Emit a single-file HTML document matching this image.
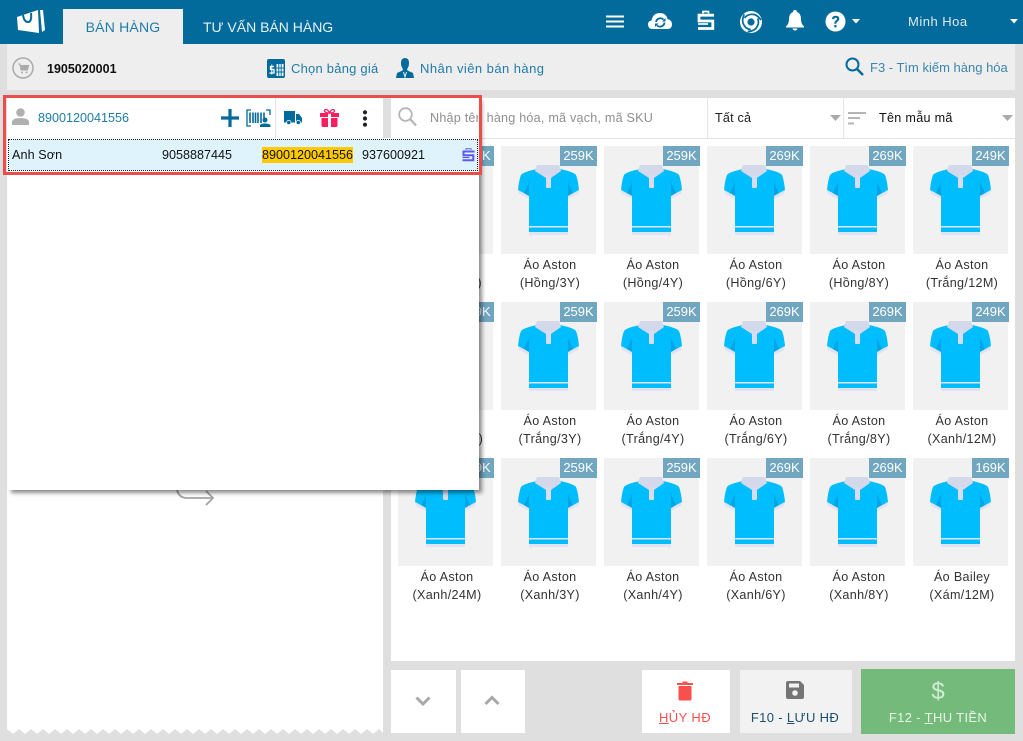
<!DOCTYPE html>
<html><head><meta charset="utf-8">
<style>
*{box-sizing:border-box}
html,body{margin:0;padding:0}
body{width:1023px;height:741px;position:relative;overflow:hidden;background:#dfdfdf;font-family:"Liberation Sans",sans-serif;font-size:13px;color:#222}
.a{position:absolute;white-space:nowrap}
svg{position:absolute;display:block}
.c{position:absolute;width:98px;height:150px}
.c .im{position:absolute;left:0;top:0;width:95px;height:108px;background:#f1f1f1}
.c .b{position:absolute;left:59px;top:0;width:37px;height:20px;background:#70a6bf;color:#fff;font-size:13px;line-height:20px;text-align:center}
.c svg{left:17px;top:19px}
.c .t{position:absolute;left:-10px;width:118px;top:110px;text-align:center;font-size:12.6px;line-height:18px;color:#333;letter-spacing:.32px;white-space:nowrap}
</style></head><body>
<svg width="0" height="0" style="position:absolute"><defs>
<symbol id="s" viewBox="0 0 61 70">
<path d="M3 10 Q5 7 19 4 L42 4 Q56 7 58 10 Q60 15 61 25 L50 31 L50 61 L11 61 L11 31 L0 25 Q1 15 3 10Z" fill="#00bdfe"/>
<rect x="11" y="62.500" width="39" height="4.500" fill="#00bdfe"/>
<rect x="11" y="61" width="39" height="1.500" fill="#dfe3f5"/><rect x="11" y="67" width="39" height="3" fill="#dfe3f5"/>
<path d="M0 25 L11 31 L11 34 L1 29Z M61 25 L50 31 L50 34 L60 29Z" fill="#dfe3f5"/>
<path d="M11 17 L11 31 L6 28Z M50 17 L50 31 L55 28Z" fill="#049ddd" opacity=".75"/>
<path d="M19 0 L41 0 L43 6 L33 13 L28 13 L17 6Z" fill="#d3d8ea"/>
<rect x="28" y="10" width="5" height="13" rx="1" fill="#d9dcee"/>
</symbol>
<g id="blade"><path d="M4.500 7 Q8 2.500 14 3.500 Q18 4.500 21 9" fill="none" stroke="#036b9b" stroke-width="1.700"/></g>
</defs></svg>

<!-- top bar -->
<div class="a" style="left:0;top:0;width:1023px;height:44px;background:#036b9b"></div>
<svg style="left:17px;top:9px" width="28" height="25" viewBox="0 0 28 25"><path d="M0 8 L21 1 L22 24 L1 21Z" fill="#fff"/><path d="M23 1 L26 1 L28 21 L25 23Z" fill="#fff"/><path d="M6 6 Q7 13 11 13 Q15 13 14 4" fill="none" stroke="#036b9b" stroke-width="2"/></svg>
<div class="a" style="left:63px;top:9px;width:120px;height:35px;background:#eee;color:#1f7ba8;font-size:14px;line-height:36px;text-align:center;letter-spacing:.2px">BÁN HÀNG</div>
<div class="a" style="left:203px;top:9px;height:35px;color:#e6f2f7;font-size:14px;line-height:36px">TƯ VẤN BÁN HÀNG</div>
<svg style="left:606px;top:15px" width="18" height="13"><path d="M0 1.500H18M0 6.500H18M0 11.500H18" stroke="#fff" stroke-width="2"/></svg>
<svg style="left:648px;top:11px" width="24" height="20" viewBox="0 0 24 20"><path d="M5 18 Q0 18 0 13.500 Q0 10 3.500 9.500 Q5 2 12 2 Q18 2 19.500 8 Q24 9 24 13.500 Q24 18 19 18Z" fill="#fff"/><path d="M8 11 A4.500 4.500 0 0 1 15.500 8.500 M16.500 11.500 A4.500 4.500 0 0 1 9 14.500" fill="none" stroke="#036b9b" stroke-width="1.800"/><path d="M14 10.500H17.500V7Z M10.500 12.500H7V16Z" fill="#036b9b"/></svg>
<svg style="left:697px;top:10px" width="18" height="21" viewBox="0 0 18 21"><path d="M6 3.500V1.500H11.500V3.500" fill="none" stroke="#fff" stroke-width="1.700"/><path d="M17 5.200H2V11H15.800V18.500H1" fill="none" stroke="#fff" stroke-width="2.800"/><path d="M1 14H11" stroke="#fff" stroke-width="1.700"/></svg>
<svg style="left:740px;top:11px" width="22" height="22" viewBox="0 0 22 22"><circle cx="11" cy="11" r="11" fill="#fff"/><use href="#blade"/><use href="#blade" transform="rotate(120 11 11)"/><use href="#blade" transform="rotate(240 11 11)"/><circle cx="11" cy="11" r="3.600" fill="#036b9b"/></svg>
<svg style="left:786px;top:10px" width="18" height="21" viewBox="0 0 18 21"><path d="M9 0 Q11 0 11 2 Q15 3.500 15 9 Q15 14 18 16.500 L18 17.500 L0 17.500 L0 16.500 Q3 14 3 9 Q3 3.500 7 2 Q7 0 9 0Z M6.500 18.500 H11.500 Q11 20.500 9 20.500 Q7 20.500 6.500 18.500Z" fill="#fff"/></svg>
<svg style="left:825px;top:11px" width="21" height="21" viewBox="0 0 21 21"><circle cx="10.500" cy="10.500" r="10" fill="#fff"/><path d="M7 8 Q7 4.700 10.700 4.700 Q14.300 4.700 14.300 7.700 Q14.300 9.500 12.300 10.700 Q11.300 11.300 11.300 12.700 H9.300 Q9.300 10.500 10.800 9.500 Q12 8.700 12 7.700 Q12 6.800 10.700 6.800 Q9.200 6.800 9.200 8.200Z" fill="#036b9b"/><rect x="9.300" y="14" width="2.200" height="2.400" fill="#036b9b"/></svg>
<svg style="left:852px;top:19px" width="8" height="5"><path d="M0 0H8L4 4.500Z" fill="#fff"/></svg>
<div class="a" style="left:908px;top:13px;color:#dce9f0;font-size:13px;line-height:18px;letter-spacing:.5px">Minh Hoa</div>
<svg style="left:1010px;top:19px" width="8" height="5"><path d="M0 0H8L4 4.500Z" fill="#fff"/></svg>

<!-- second bar -->
<div class="a" style="left:7px;top:44px;width:1008px;height:46px;background:#eee"></div>
<svg style="left:12px;top:57px" width="22" height="22" viewBox="0 0 22 22"><circle cx="11" cy="11" r="10" fill="none" stroke="#aaa" stroke-width="1.500"/><path d="M6 7H8L9 13H15.500L16.500 8.500H8.500" fill="#aaa" stroke="#aaa"/><circle cx="10" cy="15.500" r="1" fill="#aaa"/><circle cx="14.500" cy="15.500" r="1" fill="#aaa"/></svg>
<div class="a" style="left:47px;top:60px;font-weight:bold;font-size:12.5px;line-height:18px;color:#111">1905020001</div>
<svg style="left:267px;top:59px" width="18" height="19" viewBox="0 0 18 19"><rect width="18" height="19" rx="2" fill="#036b9b"/><rect x="9.500" y="5" width="7" height="12" fill="#fff"/><path d="M11.800 5V17M14.200 5V17M9.500 9H16.500M9.500 13H16.500" stroke="#036b9b"/><path d="M7 7.500H3.500V10.500H7V14H2.500" fill="none" stroke="#fff" stroke-width="1.300"/><path d="M4.800 5.500V15.500" stroke="#fff"/></svg>
<div class="a" style="left:291px;top:60px;color:#1f7ba8;font-size:13px;line-height:18px;letter-spacing:.22px">Chọn bảng giá</div>
<svg style="left:396px;top:58px" width="18" height="20" viewBox="0 0 18 20"><path d="M5 5 Q5 0 9 0 Q13 0 13 5 Q13 9 11 11 L11.500 12.500 L17 15 L18 20 H0 L1 15 L6.500 12.500 L7 11 Q5 9 5 5Z" fill="#036b9b"/><path d="M7.500 14 L9 19 L10.500 14" fill="none" stroke="#eee"/></svg>
<div class="a" style="left:420px;top:60px;color:#1f7ba8;font-size:13px;line-height:18px;letter-spacing:.45px">Nhân viên bán hàng</div>
<svg style="left:845px;top:57px" width="19" height="19" viewBox="0 0 19 19"><circle cx="7.500" cy="7.500" r="6" fill="none" stroke="#036b9b" stroke-width="2"/><path d="M12 12L18 18" stroke="#036b9b" stroke-width="2.500"/></svg>
<div class="a" style="left:870px;top:59px;color:#3d86ab;font-size:13px;line-height:18px">F3 - Tìm kiếm hàng hóa</div>

<!-- left panel -->
<div class="a" style="left:7px;top:98px;width:376px;height:636px;background:#fff"></div>
<svg style="left:7px;top:728px" width="376" height="8"><path d="M0 1 L6 6 L12 1 L18 6 L24 1 L30 6 L36 1 L42 6 L48 1 L54 6 L60 1 L66 6 L72 1 L78 6 L84 1 L90 6 L96 1 L102 6 L108 1 L114 6 L120 1 L126 6 L132 1 L138 6 L144 1 L150 6 L156 1 L162 6 L168 1 L174 6 L180 1 L186 6 L192 1 L198 6 L204 1 L210 6 L216 1 L222 6 L228 1 L234 6 L240 1 L246 6 L252 1 L258 6 L264 1 L270 6 L276 1 L282 6 L288 1 L294 6 L300 1 L306 6 L312 1 L318 6 L324 1 L330 6 L336 1 L342 6 L348 1 L354 6 L360 1 L366 6 L372 1 L376 5 V8 H0Z" fill="#dfdfdf"/></svg>
<svg style="left:176px;top:488px" width="40" height="20" viewBox="0 0 40 20"><path d="M1 0 Q3 8 11 8 L37 8 M30 1 L37 8 L30 15" transform="translate(0 2)" fill="none" stroke="#a4a4a4" stroke-width="1.800"/></svg>

<!-- right panel -->
<div class="a" style="left:391px;top:98px;width:624px;height:563px;background:#fff"></div>
<div class="a" style="left:391px;top:138px;width:624px;height:1px;background:#e3e3e3"></div>
<div class="a" style="left:707px;top:98px;width:1px;height:40px;background:#e3e3e3"></div>
<div class="a" style="left:843px;top:98px;width:1px;height:40px;background:#e3e3e3"></div>
<div class="a" style="left:430px;top:109px;color:#8f8f8f;font-size:12.6px;line-height:18px;letter-spacing:.22px">Nhập tên hàng hóa, mã vạch, mã SKU</div>
<div class="a" style="left:715px;top:109px;color:#222;font-size:12.6px;line-height:18px;letter-spacing:.2px">Tất cả</div>
<svg style="left:830px;top:115px" width="11" height="6"><path d="M0 0H11L5.500 6Z" fill="#aaa"/></svg>
<svg style="left:848px;top:112px" width="18" height="13"><path d="M0 1H18M0 6H12M0 11.500H6" stroke="#b5b5b5" stroke-width="2"/></svg>
<div class="a" style="left:879px;top:109px;color:#111;font-size:12.6px;line-height:18px;letter-spacing:.3px">Tên mẫu mã</div>
<svg style="left:1002px;top:115px" width="11" height="6"><path d="M0 0H11L5.500 6Z" fill="#aaa"/></svg>

<!-- row 1 -->
<div class="c" style="left:398px;top:146px"><div class="im"><svg width="61" height="70"><use href="#s"/></svg></div><div class="b">259K</div><div class="t">Áo Aston<br>(Hồng/24M)</div></div>
<div class="c" style="left:501px;top:146px"><div class="im"><svg width="61" height="70"><use href="#s"/></svg></div><div class="b">259K</div><div class="t">Áo Aston<br>(Hồng/3Y)</div></div>
<div class="c" style="left:604px;top:146px"><div class="im"><svg width="61" height="70"><use href="#s"/></svg></div><div class="b">259K</div><div class="t">Áo Aston<br>(Hồng/4Y)</div></div>
<div class="c" style="left:707px;top:146px"><div class="im"><svg width="61" height="70"><use href="#s"/></svg></div><div class="b">269K</div><div class="t">Áo Aston<br>(Hồng/6Y)</div></div>
<div class="c" style="left:810px;top:146px"><div class="im"><svg width="61" height="70"><use href="#s"/></svg></div><div class="b">269K</div><div class="t">Áo Aston<br>(Hồng/8Y)</div></div>
<div class="c" style="left:913px;top:146px"><div class="im"><svg width="61" height="70"><use href="#s"/></svg></div><div class="b">249K</div><div class="t">Áo Aston<br>(Trắng/12M)</div></div>
<!-- row 2 -->
<div class="c" style="left:398px;top:302px"><div class="im"><svg width="61" height="70"><use href="#s"/></svg></div><div class="b">249K</div><div class="t">Áo Aston<br>(Trắng/24M)</div></div>
<div class="c" style="left:501px;top:302px"><div class="im"><svg width="61" height="70"><use href="#s"/></svg></div><div class="b">259K</div><div class="t">Áo Aston<br>(Trắng/3Y)</div></div>
<div class="c" style="left:604px;top:302px"><div class="im"><svg width="61" height="70"><use href="#s"/></svg></div><div class="b">259K</div><div class="t">Áo Aston<br>(Trắng/4Y)</div></div>
<div class="c" style="left:707px;top:302px"><div class="im"><svg width="61" height="70"><use href="#s"/></svg></div><div class="b">269K</div><div class="t">Áo Aston<br>(Trắng/6Y)</div></div>
<div class="c" style="left:810px;top:302px"><div class="im"><svg width="61" height="70"><use href="#s"/></svg></div><div class="b">269K</div><div class="t">Áo Aston<br>(Trắng/8Y)</div></div>
<div class="c" style="left:913px;top:302px"><div class="im"><svg width="61" height="70"><use href="#s"/></svg></div><div class="b">249K</div><div class="t">Áo Aston<br>(Xanh/12M)</div></div>
<!-- row 3 -->
<div class="c" style="left:398px;top:458px"><div class="im"><svg width="61" height="70"><use href="#s"/></svg></div><div class="b">249K</div><div class="t">Áo Aston<br>(Xanh/24M)</div></div>
<div class="c" style="left:501px;top:458px"><div class="im"><svg width="61" height="70"><use href="#s"/></svg></div><div class="b">259K</div><div class="t">Áo Aston<br>(Xanh/3Y)</div></div>
<div class="c" style="left:604px;top:458px"><div class="im"><svg width="61" height="70"><use href="#s"/></svg></div><div class="b">259K</div><div class="t">Áo Aston<br>(Xanh/4Y)</div></div>
<div class="c" style="left:707px;top:458px"><div class="im"><svg width="61" height="70"><use href="#s"/></svg></div><div class="b">269K</div><div class="t">Áo Aston<br>(Xanh/6Y)</div></div>
<div class="c" style="left:810px;top:458px"><div class="im"><svg width="61" height="70"><use href="#s"/></svg></div><div class="b">269K</div><div class="t">Áo Aston<br>(Xanh/8Y)</div></div>
<div class="c" style="left:913px;top:458px"><div class="im"><svg width="61" height="70"><use href="#s"/></svg></div><div class="b">169K</div><div class="t">Áo Bailey<br>(Xám/12M)</div></div>

<!-- bottom buttons -->
<div class="a" style="left:391px;top:670px;width:65px;height:63px;background:#fff"></div>
<div class="a" style="left:461px;top:670px;width:64px;height:63px;background:#fff"></div>
<svg style="left:415px;top:696px" width="16" height="11"><path d="M1.500 1.500L8 8L14.500 1.500" fill="none" stroke="#a8a8a8" stroke-width="3"/></svg>
<svg style="left:484px;top:695px" width="16" height="11"><path d="M1.500 9L8 2.500L14.500 9" fill="none" stroke="#a8a8a8" stroke-width="3"/></svg>
<div class="a" style="left:642px;top:670px;width:88px;height:63px;background:#fff"></div>
<svg style="left:677px;top:681px" width="16" height="20" viewBox="0 0 16 20"><path d="M0 2H5.500V0.500H10.500V2H16V4H0Z M1.500 5H14.500V18 Q14.500 19.500 13 19.500H3 Q1.500 19.500 1.500 18Z" fill="#f9504f"/></svg>
<div class="a" style="left:641px;top:709px;width:88px;text-align:center;color:#f9504f;font-size:13px;line-height:18px;letter-spacing:.4px"><span style="text-decoration:underline">H</span>ỦY HĐ</div>
<div class="a" style="left:740px;top:670px;width:112px;height:63px;background:#f2f2f2"></div>
<svg style="left:786px;top:681px" width="18" height="18" viewBox="0 0 18 18"><path d="M2 0H14L18 4V16 Q18 18 16 18H2 Q0 18 0 16V2 Q0 0 2 0Z" fill="#757575"/><rect x="3" y="2.500" width="10" height="4" fill="#f2f2f2"/><circle cx="9" cy="12" r="2.800" fill="#f2f2f2"/></svg>
<div class="a" style="left:739px;top:709px;width:112px;text-align:center;color:#1d4f6b;font-size:13px;line-height:18px;letter-spacing:.35px">F10 - <span style="text-decoration:underline">L</span>ƯU HĐ</div>
<div class="a" style="left:861px;top:669px;width:154px;height:65px;background:#74bb7b"></div>
<div class="a" style="left:861px;top:678px;width:154px;text-align:center;color:#d4ecd6;font-size:24px;line-height:28px">$</div>
<div class="a" style="left:861px;top:709px;width:154px;text-align:center;color:#e9f6ea;font-size:13px;line-height:18px;letter-spacing:.35px">F12 - <span style="text-decoration:underline">T</span>HU TIỀN</div>

<!-- popup -->
<div class="a" style="left:8px;top:98px;width:471px;height:392px;background:#fff;box-shadow:3px 3px 4px rgba(0,0,0,.45)"></div>
<div class="a" style="left:275px;top:98px;width:1px;height:40px;background:#e3e3e3"></div>
<div class="a" style="left:383px;top:98px;width:8px;height:40px;background:#dfdfdf"></div>
<svg style="left:398px;top:107px" width="19" height="20" viewBox="0 0 19 20"><circle cx="7.500" cy="7.500" r="6.300" fill="none" stroke="#b5b5b5" stroke-width="1.800"/><path d="M12 12L18 18.500" stroke="#b5b5b5" stroke-width="2.200"/></svg>
<div class="a" style="left:430px;top:109px;width:48px;overflow:hidden;color:#8f8f8f;font-size:12.6px;line-height:18px;letter-spacing:.22px">Nhập tên</div>
<svg style="left:12px;top:108px" width="17" height="17" viewBox="0 0 17 17"><circle cx="8.500" cy="4.500" r="4.300" fill="#b0b0b0"/><path d="M0 17V13.500 Q1 10 8.500 10 Q16 10 17 13.500V17Z" fill="#b0b0b0"/></svg>
<div class="a" style="left:38px;top:109px;color:#1f7ba8;font-size:12.6px;line-height:18px">8900120041556</div>
<svg style="left:221px;top:109px" width="18" height="18"><path d="M9 0V18M0 9H18" stroke="#036b9b" stroke-width="3.200"/></svg>
<svg style="left:246px;top:109px" width="25" height="18" viewBox="0 0 25 18"><path d="M5 1H1V17H5M20 1H24V6" fill="none" stroke="#036b9b" stroke-width="1.300"/><path d="M4 3.500V14M7 3.500V14M9.500 3.500V14M12 3.500V14M15 3.500V14M18 3.500V9" stroke="#036b9b" stroke-width="1.600"/><circle cx="19" cy="11" r="2.500" fill="#036b9b"/><path d="M14 18V16 Q15 14.500 19 14.500 Q23 14.500 24.500 16V18Z" fill="#036b9b"/></svg>
<svg style="left:284px;top:111px" width="18" height="14" viewBox="0 0 18 14"><path d="M0 0H11V11.500H0Z M12 3H15L18 7V11.500H12Z" fill="#036b9b"/><circle cx="4.800" cy="11.500" r="2.500" fill="#fff"/><circle cx="14.300" cy="11.500" r="2.500" fill="#fff"/><circle cx="4.800" cy="11.500" r="1.800" fill="#036b9b"/><circle cx="14.300" cy="11.500" r="1.800" fill="#036b9b"/></svg>
<svg style="left:320px;top:109px" width="19" height="18" viewBox="0 0 19 18"><path d="M0 4H8V8H0Z M11 4H19V8H11Z M1.500 9H8V18H3 Q1.500 18 1.500 16.500Z M11 9H17.500V16.500 Q17.500 18 16 18H11Z" fill="#fb1d5e"/><path d="M9.500 4 Q5 4 4.500 2 Q4.500 0.500 6 0.500 Q8 0.500 9.500 4 Q11 0.500 13 0.500 Q14.500 0.500 14.500 2 Q14 4 9.500 4Z" fill="none" stroke="#fb1d5e" stroke-width="1.300"/></svg>
<svg style="left:362px;top:110px" width="6" height="17"><circle cx="3" cy="2.300" r="2.100" fill="#222"/><circle cx="3" cy="8.500" r="2.100" fill="#222"/><circle cx="3" cy="14.700" r="2.100" fill="#222"/></svg>

<div class="a" style="left:8px;top:139px;width:470px;height:32px;background:#dff3fd;border:1px dotted #222"></div>
<div class="a" style="left:12px;top:146px;color:#111;font-size:12.6px;line-height:18px;letter-spacing:.1px">Anh Sơn</div>
<div class="a" style="left:162px;top:146px;color:#111;font-size:12.6px;line-height:18px">9058887445</div>
<div class="a" style="left:262px;top:147px;height:16px;background:#fec900;color:#111;font-size:12.6px;line-height:16px">8900120041556</div>
<div class="a" style="left:362px;top:146px;color:#111;font-size:12.6px;line-height:18px">937600921</div>
<svg style="left:462px;top:148px" width="13" height="14" viewBox="0 0 13 14"><path d="M4 2V0.800H9V2" fill="none" stroke="#5b5bec" stroke-width="1"/><path d="M12.500 3.500H1.500V7.300H11.300V12.300H0.500" fill="none" stroke="#5b5bec" stroke-width="2"/><path d="M0.500 9.500H7.500" stroke="#5b5bec" stroke-width="1.200"/></svg>

<div class="a" style="left:3px;top:95px;width:479px;height:80px;border:3px solid #ee4c4c"></div>
</body></html>
